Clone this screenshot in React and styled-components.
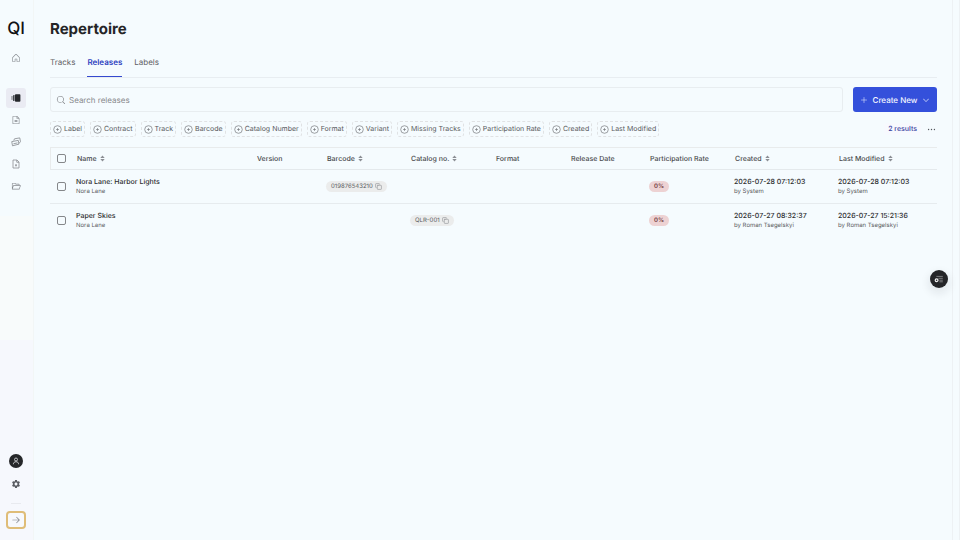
/* eslint-disable react/prop-types */
import React from "react";
import styled, { createGlobalStyle, css } from "styled-components";
import { Copy } from "lucide-react";
import { MdSettings } from "react-icons/md";
import {
  PiArrowRight,
  PiCaretDown,
  PiDotsThreeBold,
  PiFileText,
  PiFolderOpen,
  PiHouse,
  PiMagnifyingGlass,
  PiPlus,
} from "react-icons/pi";

const GlobalStyle = createGlobalStyle`
  * {
    box-sizing: border-box;
  }

  body {
    margin: 0;
    background: #f5fbfe;
    color: #2b2b2d;
    font-family: Inter, "Liberation Sans", sans-serif;
    font-size: 7px;
    line-height: 10px;
    text-rendering: geometricPrecision;
  }

  button,
  input {
    margin: 0;
    font: inherit;
    text-rendering: inherit;
  }

  svg {
    display: block;
    flex: none;
  }
`;

const Page = styled.div`
  display: flex;
  min-height: 100vh;
  border-right: 1px solid #edf1f4;
`;

const Sidebar = styled.aside`
  display: flex;
  flex-direction: column;
  align-items: center;
  width: 34px;
  padding: 18px 1px 11px 0;
  border-right: 1px solid #f2f6f6;
  background: linear-gradient(#f5fbfe 40%, #f8fbfb 40% 63%, #f6f8fd 63%);
`;

const Logo = styled.a`
  color: #111214;
  font-size: 17px;
  font-weight: 500;
  line-height: 22px;
  text-decoration: none;
`;

const SideNav = styled.nav`
  display: flex;
  flex-direction: column;
  align-items: center;
  gap: 2px;
  margin-top: 8px;
`;

const SideLink = styled.a`
  display: flex;
  align-items: center;
  justify-content: center;
  width: 20px;
  height: 20px;
  border-radius: 3px;
  color: #85898e;
  ${(props) =>
    props.$active &&
    css`
      margin-top: 18px;
      background: #eaebf3;
      color: #25272b;
    `}
`;

const SideFooter = styled.div`
  display: flex;
  flex-direction: column;
  align-items: center;
  margin-top: auto;
`;

const Avatar = styled.button`
  display: flex;
  align-items: center;
  justify-content: center;
  width: 14px;
  height: 14px;
  padding: 0;
  border: 0;
  border-radius: 50%;
  background: #26272a;
  color: #e2e3e6;
`;

const SettingsLink = styled.a`
  margin: 11px 0 14px;
  color: #595c62;
`;

const Divider = styled.hr`
  width: 10px;
  margin: 0 0 7px;
  border: 0;
  border-top: 1px solid #e8eaef;
`;

const ExpandButton = styled.button`
  display: flex;
  align-items: center;
  justify-content: center;
  width: 20px;
  height: 18px;
  padding: 0;
  border: 2px solid #dfbd78;
  border-radius: 4px;
  background: #f7f9fd;
  color: #7d8187;
`;

const Main = styled.main`
  flex: 1;
  min-width: 0;
  margin-right: 6px;
  padding: 19px 15px 20px 16px;
  border-right: 1px solid #edf1f4;
`;

const Title = styled.h1`
  margin: 0;
  color: #252527;
  font-size: 15px;
  font-weight: 700;
  line-height: 20px;
`;

const Tabs = styled.nav`
  display: flex;
  gap: 12px;
  margin-top: 14px;
  border-bottom: 1px solid #e8edf1;
`;

const Tab = styled.a`
  height: 24px;
  border-bottom: 1px solid ${(props) => (props.$active ? "#3549cf" : "transparent")};
  color: ${(props) => (props.$active ? "#3042c0" : "#5f6063")};
  font-size: 8px;
  font-weight: ${(props) => (props.$active ? 600 : 400)};
  line-height: 18px;
  text-decoration: none;
`;

const Toolbar = styled.div`
  display: flex;
  gap: 10px;
  margin-top: 9px;
`;

const SearchBox = styled.label`
  display: flex;
  flex: 1;
  align-items: center;
  gap: 3px;
  height: 25px;
  padding: 0 5px;
  border: 1px solid #e8edf0;
  border-radius: 3px;
  color: #77797d;
`;

const SearchInput = styled.input`
  flex: 1;
  min-width: 0;
  padding: 0;
  border: 0;
  outline: 0;
  background: transparent;
  color: #2b2b2d;
  font-size: 8px;

  &::placeholder {
    color: #88898c;
    opacity: 1;
  }
`;

const CreateButton = styled.button`
  display: flex;
  align-items: center;
  justify-content: space-between;
  width: 84px;
  height: 25px;
  padding: 0 7px;
  border: 0;
  border-radius: 3px;
  background: #3450db;
  color: #f3f6ff;
  font-size: 8px;
  font-weight: 500;
`;

const FilterBar = styled.div`
  display: flex;
  flex-wrap: wrap;
  align-items: center;
  gap: 5px;
  margin-top: 9px;
`;

const Chip = styled.button`
  display: flex;
  align-items: center;
  gap: 2px;
  height: 16px;
  padding: 0 2px;
  border: 1px dashed #e0e2e4;
  border-radius: 3px;
  background: transparent;
  color: #57595c;
  font-weight: 400;
`;

const Results = styled.span`
  margin-left: auto;
  padding: 1px 4px;
  border-radius: 3px;
  background: #f7f9fe;
  color: #38409f;
  font-weight: 500;
`;

const MoreButton = styled.button`
  padding: 0;
  border: 0;
  background: transparent;
  color: #55585e;
`;

const ReleaseTable = styled.table`
  width: 100%;
  margin-top: 10px;
  border-spacing: 0;
  table-layout: fixed;
`;

const Col = styled.col`
  width: ${(props) => (props.$width ? `${props.$width}px` : "auto")};
`;

const HeadCell = styled.th`
  height: 23px;
  padding: 0 0 0 7px;
  border-top: 1px solid #e8ebec;
  border-bottom: 1px solid #e4e9ec;
  color: #48494c;
  font-weight: 500;
  text-align: left;
  white-space: nowrap;

  &:first-child {
    border-left: 1px solid #e8ebec;
    padding-left: 6px;
  }
`;

const HeadLabel = styled.span`
  display: flex;
  align-items: center;
  gap: 3px;
`;

const Cell = styled.td`
  height: 34px;
  padding: 0 0 0 6px;
  border-bottom: 1px solid #e6ebee;
  white-space: nowrap;

  &:first-child {
    padding-left: 7px;
  }

  tr:last-child > & {
    height: 33px;
    border-bottom: 0;
  }
`;

const Checkbox = styled.input`
  display: block;
  width: 9px;
  height: 9px;
  border: 1px solid #85878a;
  border-radius: 2px;
  appearance: none;

  &:checked {
    background: #3450db;
  }
`;

const Primary = styled.div`
  color: #2c2d2f;
  font-weight: 500;
`;

const Secondary = styled.div`
  color: #5b5c5f;
  font-size: 6px;
`;

const CodePill = styled.span`
  display: inline-flex;
  align-items: center;
  gap: 2px;
  height: 11px;
  padding: 0 5px;
  border-radius: 6px;
  background: #ebecec;
  color: #56595d;
  font-size: 6px;
  font-weight: 400;
  vertical-align: middle;
`;

const CopyButton = styled.button`
  padding: 0;
  border: 0;
  background: transparent;
  color: #8b8e92;
`;

const RatePill = styled.span`
  display: inline-flex;
  align-items: center;
  height: 11px;
  padding: 0 5px;
  border-radius: 6px;
  background: #edd2d3;
  color: #71393d;
  font-size: 6px;
  font-weight: 600;
  vertical-align: middle;
`;

const HelpButton = styled.button`
  position: fixed;
  top: 270px;
  right: 12px;
  display: flex;
  align-items: center;
  justify-content: center;
  width: 18px;
  height: 18px;
  padding: 0;
  border: 0;
  border-radius: 50%;
  background: #242528;
  box-shadow: 0 4px 8px 2px rgba(30, 30, 40, 0.08);
`;

const CatalogIcon = () => (
  <svg width="10" height="8" viewBox="0 0 10 8" aria-hidden="true">
    <rect x="4" y="0.3" width="5.4" height="7.4" rx="0.8" fill="#25272b" />
    <rect x="2" y="1" width="1.6" height="6" rx="0.4" fill="#44474c" />
    <rect x="0.4" y="2" width="1.2" height="4" rx="0.4" fill="#85888e" />
  </svg>
);

const StackIcon = () => (
  <svg
    width="10"
    height="10"
    viewBox="0 0 20 20"
    fill="none"
    stroke="currentColor"
    strokeWidth="1.6"
    strokeLinejoin="round"
    aria-hidden="true"
  >
    <path d="M5.5 7 7 3.6 17.5 1.8 19 9.5 16 12.5" />
    <path d="M1.5 9.2 14.5 6.8 16 14.2 3 17.6Z" />
    <path d="M4.8 13.6 13 11.8" />
  </svg>
);

const FilePlayIcon = () => (
  <svg
    width="10"
    height="10"
    viewBox="0 0 20 20"
    fill="none"
    stroke="currentColor"
    strokeWidth="1.5"
    strokeLinejoin="round"
    aria-hidden="true"
  >
    <path d="M4 2h8l4 4v12H4Z" />
    <path d="M11.5 2v4.5H16M10 10v5M8 12.5h4" />
  </svg>
);

const UserIcon = () => (
  <svg
    width="8"
    height="8"
    viewBox="0 0 16 16"
    fill="none"
    stroke="currentColor"
    strokeWidth="1.6"
    aria-hidden="true"
  >
    <circle cx="8" cy="5" r="3" />
    <path d="M2.8 14.5c0-3.4 2-5 5.2-5s5.2 1.6 5.2 5" />
  </svg>
);

const AddFilterIcon = () => (
  <svg width="9" height="9" viewBox="0 0 18 18" fill="none" stroke="#7f8286" aria-hidden="true">
    <circle cx="9" cy="9" r="7.6" strokeWidth="1.5" />
    <path d="M9 6.4v5.2M6.4 9h5.2" strokeWidth="1.7" />
  </svg>
);

const SortIcon = () => (
  <svg width="5" height="7" viewBox="0 0 5 7" aria-hidden="true">
    <path d="M0.3 2.9 2.5 0.5 4.7 2.9ZM0.3 4.1 2.5 6.5 4.7 4.1Z" fill="#8b8e94" />
  </svg>
);

const ListSettingsIcon = () => (
  <svg width="10" height="8" viewBox="0 0 10 8" aria-hidden="true">
    <path d="M2.4 1.4h6.4M4.4 3.3h4.4M5.4 5.2h3.4M5.4 6.8h3.4" stroke="#909294" strokeWidth="0.8" />
    <circle cx="2.6" cy="5.2" r="1.4" fill="none" stroke="#f4f4f4" strokeWidth="1.2" />
  </svg>
);

const navItems = [
  { label: "Home", icon: <PiHouse size={10} /> },
  { label: "Repertoire", icon: <CatalogIcon />, active: true },
  { label: "Contracts", icon: <PiFileText size={10} /> },
  { label: "Royalties", icon: <StackIcon /> },
  { label: "Statements", icon: <FilePlayIcon /> },
  { label: "Files", icon: <PiFolderOpen size={10} /> },
];

const tabs = ["Tracks", "Releases", "Labels"];

const filters = [
  "Label",
  "Contract",
  "Track",
  "Barcode",
  "Catalog Number",
  "Format",
  "Variant",
  "Missing Tracks",
  "Participation Rate",
  "Created",
  "Last Modified",
];

const columns = [
  { label: "Name", sortable: true },
  { label: "Version", width: 70 },
  { label: "Barcode", width: 84, sortable: true },
  { label: "Catalog no.", width: 85, sortable: true },
  { label: "Format", width: 75 },
  { label: "Release Date", width: 79 },
  { label: "Participation Rate", width: 85 },
  { label: "Created", width: 104, sortable: true },
  { label: "Last Modified", width: 105, sortable: true },
];

const releases = [
  {
    name: "Nora Lane: Harbor Lights",
    artist: "Nora Lane",
    barcode: "019876543210",
    rate: "0%",
    created: ["2026-07-28 07:12:03", "by System"],
    modified: ["2026-07-28 07:12:03", "by System"],
  },
  {
    name: "Paper Skies",
    artist: "Nora Lane",
    catalog: "QLR-001",
    rate: "0%",
    created: ["2026-07-27 08:32:37", "by Roman Tsegelskyi"],
    modified: ["2026-07-27 15:21:36", "by Roman Tsegelskyi"],
  },
];

const TwoLines = ({ lines }) => (
  <>
    <Primary>{lines[0]}</Primary>
    <Secondary>{lines[1]}</Secondary>
  </>
);

const Code = ({ value }) =>
  value ? (
    <CodePill>
      {value}
      <CopyButton type="button" aria-label={`Copy ${value}`}>
        <Copy size={7} />
      </CopyButton>
    </CodePill>
  ) : null;

const ReleaseRow = ({ release }) => (
  <tr>
    <Cell>
      <Checkbox type="checkbox" aria-label={`Select ${release.name}`} />
    </Cell>
    <Cell>
      <TwoLines lines={[release.name, release.artist]} />
    </Cell>
    <Cell />
    <Cell>
      <Code value={release.barcode} />
    </Cell>
    <Cell>
      <Code value={release.catalog} />
    </Cell>
    <Cell />
    <Cell />
    <Cell>
      <RatePill>{release.rate}</RatePill>
    </Cell>
    <Cell>
      <TwoLines lines={release.created} />
    </Cell>
    <Cell>
      <TwoLines lines={release.modified} />
    </Cell>
  </tr>
);

export default () => (
  <>
    <GlobalStyle />
    <Page>
      <Sidebar>
        <Logo href="#home">QI</Logo>
        <SideNav aria-label="Main">
          {navItems.map(({ label, icon, active }) => (
            <SideLink key={label} href="#nav" aria-label={label} $active={active}>
              {icon}
            </SideLink>
          ))}
        </SideNav>
        <SideFooter>
          <Avatar type="button" aria-label="Account">
            <UserIcon />
          </Avatar>
          <SettingsLink href="#settings" aria-label="Settings">
            <MdSettings size={10} />
          </SettingsLink>
          <Divider />
          <ExpandButton type="button" aria-label="Expand sidebar">
            <PiArrowRight size={10} />
          </ExpandButton>
        </SideFooter>
      </Sidebar>
      <Main>
        <Title>Repertoire</Title>
        <Tabs aria-label="Repertoire sections">
          {tabs.map((tab) => (
            <Tab key={tab} href={`#${tab.toLowerCase()}`} $active={tab === "Releases"}>
              {tab}
            </Tab>
          ))}
        </Tabs>
        <Toolbar>
          <SearchBox>
            <PiMagnifyingGlass size={10} />
            <SearchInput type="search" placeholder="Search releases" aria-label="Search releases" />
          </SearchBox>
          <CreateButton type="button">
            <PiPlus size={8} />
            Create New
            <PiCaretDown size={8} />
          </CreateButton>
        </Toolbar>
        <FilterBar>
          {filters.map((filter) => (
            <Chip key={filter} type="button">
              <AddFilterIcon />
              {filter}
            </Chip>
          ))}
          <Results>2 results</Results>
          <MoreButton type="button" aria-label="More options">
            <PiDotsThreeBold size={11} />
          </MoreButton>
        </FilterBar>
        <ReleaseTable>
          <colgroup>
            <Col $width={20} />
            {columns.map(({ label, width }) => (
              <Col key={label} $width={width} />
            ))}
          </colgroup>
          <thead>
            <tr>
              <HeadCell>
                <Checkbox type="checkbox" aria-label="Select all releases" />
              </HeadCell>
              {columns.map(({ label, sortable }) => (
                <HeadCell key={label}>
                  <HeadLabel>
                    {label}
                    {sortable && <SortIcon />}
                  </HeadLabel>
                </HeadCell>
              ))}
            </tr>
          </thead>
          <tbody>
            {releases.map((release) => (
              <ReleaseRow key={release.name} release={release} />
            ))}
          </tbody>
        </ReleaseTable>
      </Main>
      <HelpButton type="button" aria-label="Open checklist">
        <ListSettingsIcon />
      </HelpButton>
    </Page>
  </>
);
